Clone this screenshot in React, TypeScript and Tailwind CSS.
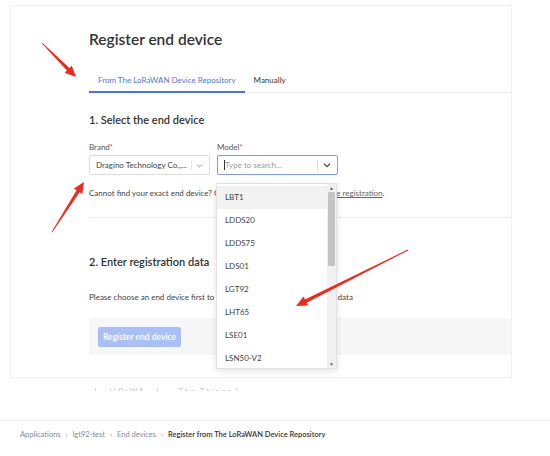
import React from 'react';

const font = { fontFamily: 'Lato, "Noto Sans", sans-serif' };

type Pt = [number, number];

// tapered red annotation arrow, tail -> tip
const arrowPoints = (tail: Pt, tip: Pt) => {
  const dx = tip[0] - tail[0];
  const dy = tip[1] - tail[1];
  const len = Math.hypot(dx, dy);
  const ux = dx / len;
  const uy = dy / len;
  const nx = -uy;
  const ny = ux;
  const bx = tip[0] - ux * 11;
  const by = tip[1] - uy * 11;
  const pts: Pt[] = [
    [tail[0] + nx * 0.4, tail[1] + ny * 0.4],
    [bx + nx * 1.8, by + ny * 1.8],
    [bx + nx * 5, by + ny * 5],
    tip,
    [bx - nx * 5, by - ny * 5],
    [bx - nx * 1.8, by - ny * 1.8],
    [tail[0] - nx * 0.4, tail[1] - ny * 0.4],
  ];
  return pts.map((p) => `${p[0].toFixed(1)},${p[1].toFixed(1)}`).join(' ');
};

const models = ['LBT1', 'LDDS20', 'LDDS75', 'LDS01', 'LGT92', 'LHT65', 'LSE01', 'LSN50-V2'];

const Chevron: React.FC<{ className?: string }> = ({ className }) => (
  <svg viewBox="0 0 12 12" className={className} fill="none" stroke="currentColor" strokeWidth="1.4">
    <path d="M2.5 4.5 6 8l3.5-3.5" />
  </svg>
);

const App: React.FC = () => {
  return (
    <div className="relative w-[550px] h-[456px] overflow-hidden bg-white text-[#333]" style={font}>
      {/* Card */}
      <div className="ml-[10px] mt-[5px] w-[502px] h-[373px] border border-[#f0f0f0] pl-[78px]">
        <h1 className="mt-[21px] h-[24px] leading-[24px] text-[15.5px] font-semibold text-[#333]">Register end device</h1>

        {/* Tabs */}
        <div className="mt-[17px] flex border-b border-[#eeeeee] h-[25px]">
          <div className="px-[9px] h-[25px] text-[8px] leading-[24px] text-[#5279de] border-b-2 border-[#4b73d8]">
            From The LoRaWAN Device Repository
          </div>
          <div className="px-[9px] h-[25px] text-[8px] leading-[24px] text-[#333]">Manually</div>
        </div>

        <h2 className="mt-[19px] h-[16px] leading-[16px] text-[11px] font-semibold text-[#333]">1. Select the end device</h2>

        <div className="mt-[14px] flex gap-[7px]">
          <div className="w-[121px]">
            <div className="h-[11px] leading-[11px] text-[8px] text-[#555]">
              Brand<span className="text-[#e03b3b] align-top text-[7px]">*</span>
            </div>
            <div className="mt-[2px] h-[20px] border border-[#dcdcdc] rounded-[2px] flex items-center pl-[6px] pr-[5px]">
              <span className="flex-1 text-[8px] text-[#444] whitespace-nowrap overflow-hidden">Dragino Technology Co.,...</span>
              <span className="w-px h-[10px] bg-[#e6e6e6] mx-[3px]" />
              <Chevron className="w-[9px] h-[9px] text-[#bbb]" />
            </div>
          </div>
          <div className="w-[121px]">
            <div className="h-[11px] leading-[11px] text-[8px] text-[#555]">
              Model<span className="text-[#e03b3b] align-top text-[7px]">*</span>
            </div>
            <div className="mt-[2px] h-[20px] border border-[#7f9edf] rounded-[2px] flex items-center pl-[6px] pr-[5px]">
              <span className="w-px h-[10px] bg-[#333]" />
              <span className="flex-1 text-[8px] text-[#9a9a9a]">Type to search...</span>
              <span className="w-px h-[10px] bg-[#dcdcdc] mx-[4px]" />
              <Chevron className="w-[10px] h-[10px] text-[#444]" />
            </div>
          </div>
        </div>

        <p className="mt-[12px] h-[12px] leading-[12px] text-[8px] text-[#444]">
          Cannot find your exact end device?  Get help here and try{' '}
          <span className="underline text-[#666]">manual device registration</span>.
        </p>

        <div className="mt-[18px] border-t border-[#ececec]" />

        <h2 className="mt-[36px] h-[16px] leading-[16px] text-[11px] font-semibold text-[#333]">2. Enter registration data</h2>

        <p className="mt-[21px] h-[12px] leading-[12px] text-[8px] text-[#444]">
          Please choose an end device first to proceed with entering registration data
        </p>

        <div className="mt-[15px] h-[37px] bg-[#f7f7f7] flex items-center pl-[9px]">
          <div className="h-[20px] px-[5px] rounded-[2px] bg-[#a9bff5] text-white text-[8.5px] font-semibold leading-[20px]">
            Register end device
          </div>
        </div>
      </div>

      {/* blurred cut-off line under card */}
      <div className="ml-[50px] mt-[9px] h-[4px] overflow-hidden text-[7px] leading-[9px] text-[#c4c4c4] blur-[0.6px] tracking-[2px]">
        . . . . . . l . lLPaWA . l . . The Things l . . . . .
      </div>

      <div className="mt-[29px] border-t border-[#f2f2f2]" />

      {/* Breadcrumb */}
      <div className="mt-[8px] ml-[20px] flex items-center gap-[5px] text-[7.5px] text-[#8a8a8a]">
        <span>Applications</span>
        <span className="text-[7px]">›</span>
        <span>lgt92-test</span>
        <span className="text-[7px]">›</span>
        <span>End devices</span>
        <span className="text-[7px]">›</span>
        <span className="font-semibold text-[#333]">Register from The LoRaWAN Device Repository</span>
      </div>

      {/* Model dropdown */}
      <div className="absolute left-[216px] top-[183px] w-[121px] h-[186px] bg-white border border-[#e2e2e2] shadow-[0_2px_6px_rgba(0,0,0,0.12)] flex">
        <div className="flex-1 pt-[2px]">
          {models.map((m, i) => (
            <div
              key={m}
              className={`h-[23px] leading-[23px] pl-[8px] text-[8px] text-[#444] ${i === 0 ? 'bg-[#f2f2f2]' : ''}`}
            >
              {m}
            </div>
          ))}
        </div>
        <div className="w-[9px] bg-[#f1f1f1] flex flex-col items-center">
          <div className="h-[8px] text-[5px] leading-[8px] text-[#666]">▲</div>
          <div className="w-[7px] h-[74px] bg-[#c4c4c4] rounded-[1px]" />
          <div className="flex-1" />
          <div className="h-[8px] text-[5px] leading-[8px] text-[#666]">▼</div>
        </div>
      </div>

      {/* Annotation arrows */}
      <svg className="absolute left-0 top-0 pointer-events-none" width="550" height="456">
        <polygon points={arrowPoints([42, 43], [76, 77])} fill="#ec2a1d" />
        <polygon points={arrowPoints([52, 232], [84, 182])} fill="#ec2a1d" />
        <polygon points={arrowPoints([408, 250], [296, 306])} fill="#ec2a1d" />
      </svg>
    </div>
  );
};

export default App;
